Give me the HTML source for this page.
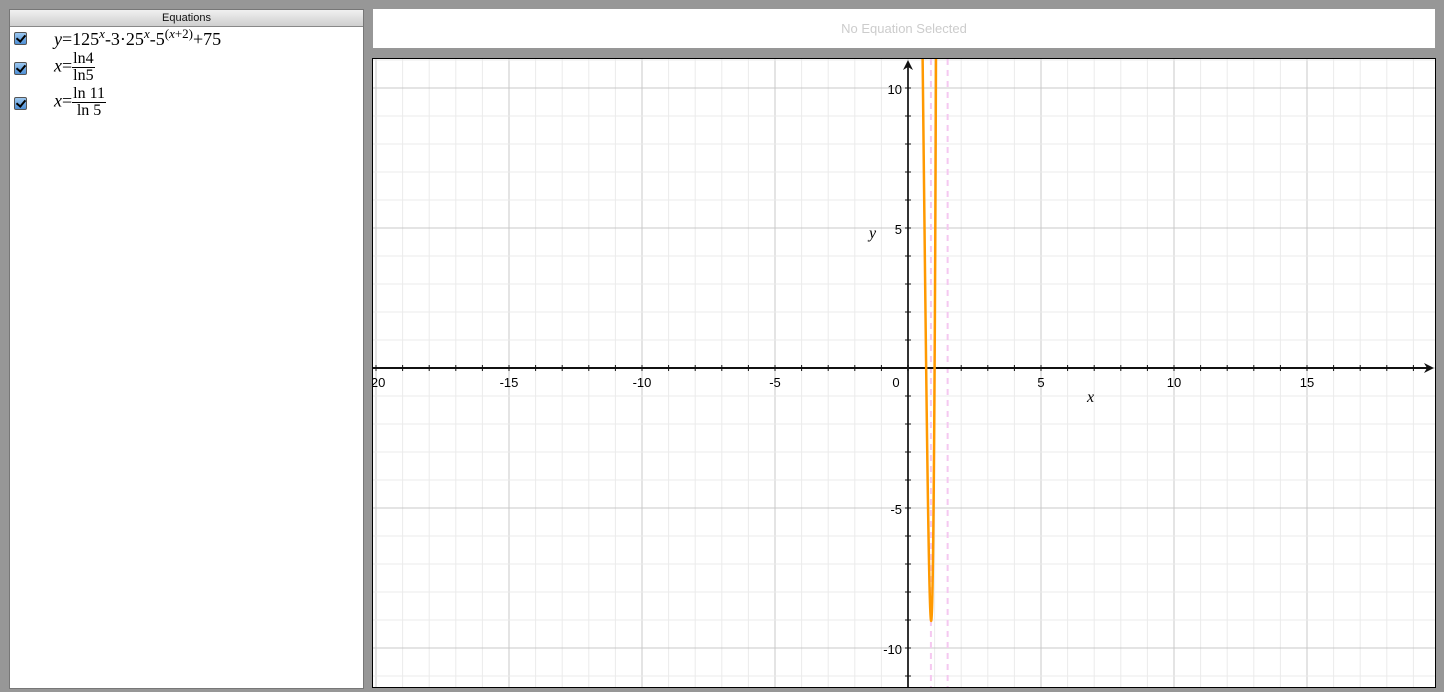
<!DOCTYPE html>
<html><head><meta charset="utf-8"><style>
body{margin:0;width:1444px;height:692px;background:#979797;position:relative;overflow:hidden;font-family:"Liberation Sans",sans-serif}
#left{position:absolute;left:9px;top:9px;width:353px;height:678px;background:#fff;border:1px solid #777}
#hdr{height:16px;background:linear-gradient(#f0f0f0,#cfcfcf);border-bottom:1px solid #888;text-align:center;font-size:11px;line-height:16px;color:#111}
.row{position:absolute;left:4px;font-family:"Liberation Serif",serif;font-size:18px;color:#000}
.cb{position:absolute;left:0;width:11px;height:11px;border:1px solid #555;background:linear-gradient(#9cc8f0,#4d8fd6);border-radius:2px}
.cb:after{content:"";position:absolute;left:3px;top:0px;width:4px;height:7px;border:solid #000;border-width:0 2px 2px 0;transform:rotate(40deg)}
.eq{position:absolute;left:40px;white-space:nowrap}
sup{font-size:13px;vertical-align:7px;line-height:0}
.fr{display:inline-block;vertical-align:middle;text-align:center;font-size:16px;line-height:16px}
.fr span{display:block}
.fr .n{border-bottom:1px solid #000;padding:0 1px}
#top{position:absolute;left:373px;top:9px;width:1062px;height:39px;background:#fff;text-align:center;line-height:40px;font-size:13px;color:#ccc}
svg{position:absolute;left:0;top:0}
</style></head><body>
<div id="left"><div id="hdr">Equations</div>
<div class="row" style="top:19px"><div class="cb" style="top:3px"></div><div class="eq" style="top:0"><i>y</i>=125<sup><i>x</i></sup>-3·25<sup><i>x</i></sup>-5<sup>(<i>x</i>+2)</sup>+75</div></div>
<div class="row" style="top:41px"><div class="cb" style="top:11px"></div><div class="eq" style="top:0"><i>x</i>=<span class="fr"><span class="n">ln4</span><span>ln5</span></span></div></div>
<div class="row" style="top:76px"><div class="cb" style="top:11px"></div><div class="eq" style="top:0"><i>x</i>=<span class="fr"><span class="n">ln 11</span><span>ln 5</span></span></div></div>
</div>
<div id="top">No Equation Selected</div>
<svg width="1444" height="692" id="g"></svg>
<script>
var s='',ox=908,oy=368,sx=26.6,sy=28,L=373,T=59,R=1435,B=687;
s+='<defs><clipPath id="c"><rect x="'+L+'" y="'+T+'" width="'+(R-L)+'" height="'+(B-T)+'"/></clipPath></defs>';
s+='<rect x="'+L+'" y="'+T+'" width="'+(R-L)+'" height="'+(B-T)+'" fill="#fff"/><g clip-path="url(#c)">';
for(var i=-20;i<=20;i++){var x=ox+i*sx;s+='<line x1="'+x+'" y1="'+T+'" x2="'+x+'" y2="'+B+'" stroke="'+(i%5==0?'#c8c8c8':'#ebebeb')+'" stroke-width="1"/>';}
for(var j=-12;j<=12;j++){var y=oy-j*sy;s+='<line x1="'+L+'" y1="'+y+'" x2="'+R+'" y2="'+y+'" stroke="'+(j%5==0?'#c8c8c8':'#ebebeb')+'" stroke-width="1"/>';}
[Math.log(4)/Math.log(5),Math.log(11)/Math.log(5)].forEach(function(v){var x=ox+v*sx;s+='<line x1="'+x+'" y1="'+T+'" x2="'+x+'" y2="'+B+'" stroke="#f5c8f0" stroke-width="2" stroke-dasharray="6,5"/>';});
s+='<line x1="'+L+'" y1="'+oy+'" x2="'+(R-4)+'" y2="'+oy+'" stroke="#111" stroke-width="2"/>';
s+='<line x1="'+ox+'" y1="'+(T+4)+'" x2="'+ox+'" y2="'+B+'" stroke="#333" stroke-width="2"/>';
for(var i=-20;i<=19;i++){var x=ox+i*sx;s+='<line x1="'+x+'" y1="'+(oy-3)+'" x2="'+x+'" y2="'+(oy+3)+'" stroke="#111"/>';}
for(var j=-11;j<=10;j++){var y=oy-j*sy;s+='<line x1="'+(ox-3)+'" y1="'+y+'" x2="'+(ox+3)+'" y2="'+y+'" stroke="#111"/>';}
s+='<path d="M'+(R-1)+' '+oy+' l-10 -5 l3 5 l-3 5z" fill="#111"/><path d="M'+ox+' '+(T+1)+' l-5 10 l5 -3 l5 3z" fill="#111"/>';
var p='';for(var x=0.4;x<=1.6;x+=0.002){var y=Math.pow(125,x)-3*Math.pow(25,x)-Math.pow(5,x+2)+75;if(y>12)y=12;p+=(p?'L':'M')+(ox+x*sx).toFixed(2)+' '+(oy-y*sy).toFixed(2);}
s+='<path d="'+p+'" fill="none" stroke="#ff9900" stroke-width="2.5"/>';
var lab=function(t,x,y,a){s+='<text x="'+x+'" y="'+y+'" font-size="13" text-anchor="'+a+'" font-family="Liberation Sans">'+t+'</text>';};
[-15,-10,-5,5,10,15].forEach(function(i){lab(i,ox+i*sx,387,'middle');});lab('-20',376,387,'middle');lab('0',896,387,'middle');
[10,5,-5,-10].forEach(function(j){lab(j,ox-6,oy-j*sy+6,'end');});
s+='<text x="1087" y="402" font-size="16" font-style="italic" font-family="Liberation Serif">x</text><text x="869" y="238" font-size="16" font-style="italic" font-family="Liberation Serif">y</text>';
s+='</g><rect x="'+(L-0.5)+'" y="'+(T-0.5)+'" width="'+(R-L+1)+'" height="'+(B-T+1)+'" fill="none" stroke="#000"/>';
document.getElementById('g').innerHTML=s;
</script>
</body></html>
